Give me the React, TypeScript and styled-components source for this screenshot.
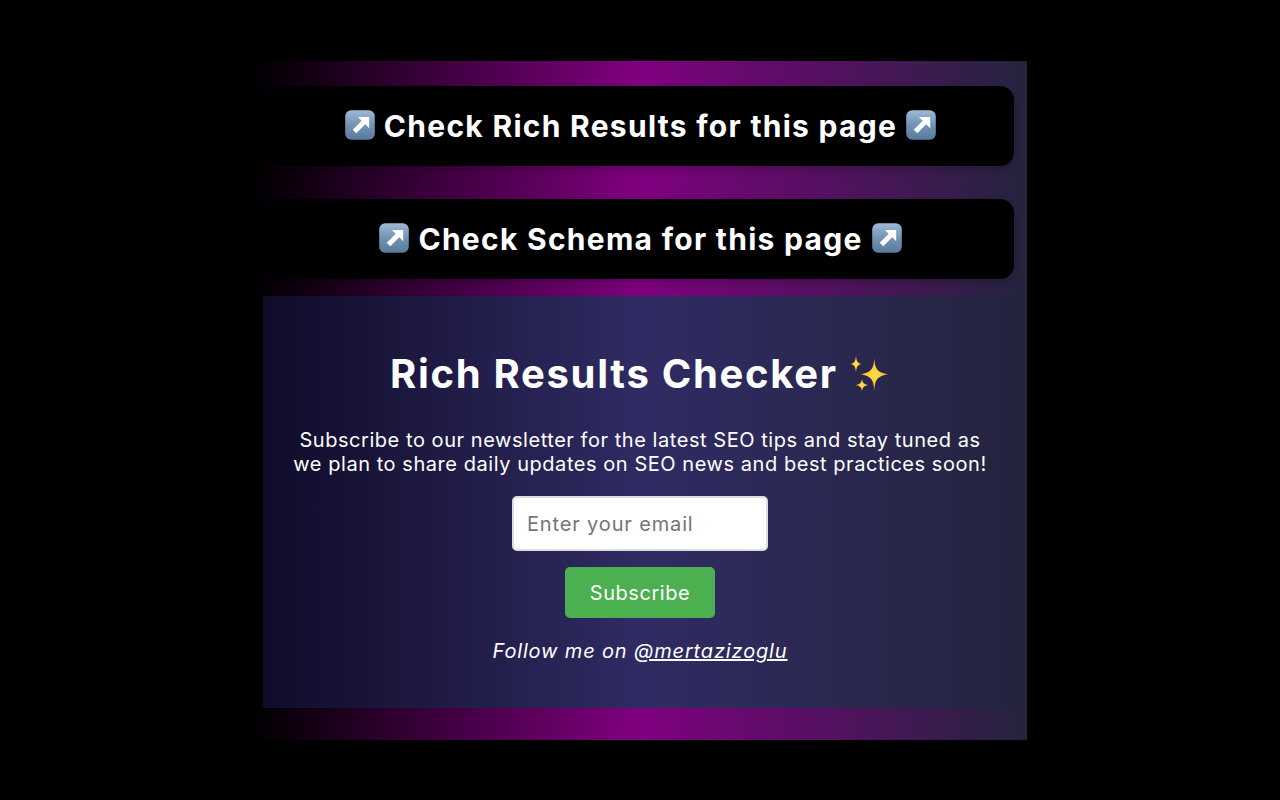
import styled, { createGlobalStyle } from 'styled-components';

const GlobalStyle = createGlobalStyle`
    html, body {
        margin: 0;
        padding: 0;
        height: 100%;
        background-color: #000;
    }
    body {
        font-family: "Inter", "Noto Sans", sans-serif;
        color: #fff;
    }
`

const ArrowEmoji = () => (
    <EmojiSvg viewBox="0 0 32 32" width={32} height={32}>
        <defs>
            <linearGradient id="arrowBg" x1="0" y1="0" x2="0" y2="1">
                <stop offset="0" stopColor="#9dbad6" />
                <stop offset="0.5" stopColor="#7393b3" />
                <stop offset="1" stopColor="#587a9c" />
            </linearGradient>
        </defs>
        <rect x="1.200" y="1.200" width="29.600" height="29.600" rx="6" fill="url(#arrowBg)" />
        <path d="M14 8 H25.200 V19.200 L21.300 15.300 L12.300 24.300 L8.700 20.700 L17.700 11.700 Z" fill="#fff" />
    </EmojiSvg>
)

const SparkleEmoji = () => (
    <SparkleSvg viewBox="0 0 40 40" width={40} height={40}>
        <defs>
            <radialGradient id="sparkleFill" cx="0.5" cy="0.5" r="0.5">
                <stop offset="0" stopColor="#ffe14d" />
                <stop offset="0.6" stopColor="#fdc62e" />
                <stop offset="1" stopColor="#e8a33a" />
            </radialGradient>
        </defs>
        <path d="M24.300 3 C25 14 27 17.500 38.500 19.300 C27 21 25 25 24.300 36 C23.600 25 21.600 21 10 19.300 C21.600 17.500 23.600 14 24.300 3 Z" fill="url(#sparkleFill)" />
        <path d="M6 0.500 C6.500 6 7.500 8 11.200 9 C7.500 10 6.500 12 6 17.500 C5.500 12 4.500 10 0.800 9 C4.500 8 5.500 6 6 0.500 Z" fill="url(#sparkleFill)" />
        <path d="M12 23.500 C12.500 27.500 13.500 29 18 30 C13.500 31 12.500 32.500 12 36.500 C11.500 32.500 10.500 31 6 30 C10.500 29 11.500 27.500 12 23.500 Z" fill="url(#sparkleFill)" />
    </SparkleSvg>
)

const links = ['Check Rich Results for this page', 'Check Schema for this page']

export default function App() {
    return (
        <Page>
            <GlobalStyle />
            <Container>
                {links.map((text) => (
                    <LinkButton key={text} href="#">
                        <ArrowEmoji />
                        <LinkLabel>{text}</LinkLabel>
                        <ArrowEmoji />
                    </LinkButton>
                ))}
                <Panel>
                    <Title>
                        Rich Results Checker <SparkleEmoji />
                    </Title>
                    <Description>
                        Subscribe to our newsletter for the latest SEO tips and stay tuned as we plan to share daily updates on SEO news and best practices soon!
                    </Description>
                    <EmailInput type="email" placeholder="Enter your email" />
                    <SubscribeButton>Subscribe</SubscribeButton>
                    <Follow>
                        Follow me on <FollowLink href="#">@mertazizoglu</FollowLink>
                    </Follow>
                </Panel>
            </Container>
        </Page>
    );
}

const Page = styled.div`
    display: flex;
    justify-content: center;
    padding-top: 61px;
    min-height: 739px;
    background-color: #000;
`
const Container = styled.div`
    box-sizing: border-box;
    width: 774px;
    height: 679px;
    padding: 25px 0 32px 10px;
    display: flex;
    flex-direction: column;
    background: linear-gradient(to right, #000 0%, #800080 50%, #24243e 100%);
`
const LinkButton = styled.a`
    display: flex;
    align-items: center;
    justify-content: center;
    gap: 8px;
    height: 80px;
    margin: 0 13px 33px 4px;
    border-radius: 14px;
    background-color: #000;
    box-shadow: 0 4px 10px rgba(0, 0, 0, 0.2);
    color: #fff;
    text-decoration: none;
    &:nth-child(2) {
        margin-bottom: 17px;
    }
`
const LinkLabel = styled.span`
    font-weight: 700;
    font-size: 30px;
    letter-spacing: 1.28px;
`
const EmojiSvg = styled.svg`
    flex-shrink: 0;
    margin-top: -2px;
`
const SparkleSvg = styled.svg`
    margin-left: 1px;
    vertical-align: -7px;
`
const Panel = styled.section`
    flex: 1;
    display: flex;
    flex-direction: column;
    align-items: center;
    background: linear-gradient(to right, #0f0c29 0%, #302b63 50%, #24243e 100%);
    padding: 53px 10px 0 0;
`
const Title = styled.h1`
    margin: 0;
    font-size: 40px;
    line-height: 50px;
    font-weight: 700;
    letter-spacing: 1.7px;
`
const Description = styled.p`
    margin: 29px 0 0;
    width: 700px;
    text-align: center;
    font-size: 20px;
    line-height: 24px;
    letter-spacing: 0.55px;
`
const EmailInput = styled.input`
    box-sizing: border-box;
    width: 256px;
    height: 55px;
    margin-top: 20px;
    padding: 0 13px;
    border: 2px solid #ddd;
    border-radius: 5px;
    background-color: #fff;
    font-family: inherit;
    font-size: 20px;
    letter-spacing: 0.85px;
    &::placeholder {
        color: #757575;
    }
`
const SubscribeButton = styled.button`
    width: 150px;
    height: 51px;
    margin-top: 16px;
    border: none;
    border-radius: 5px;
    background-color: #4caf50;
    color: #fff;
    font-family: inherit;
    font-size: 20px;
    letter-spacing: 0.55px;
`
const Follow = styled.p`
    margin: 20px 0 0;
    font-size: 20px;
    line-height: 26px;
    font-style: italic;
    letter-spacing: 0.85px;
`
const FollowLink = styled.a`
    color: #fff;
`
